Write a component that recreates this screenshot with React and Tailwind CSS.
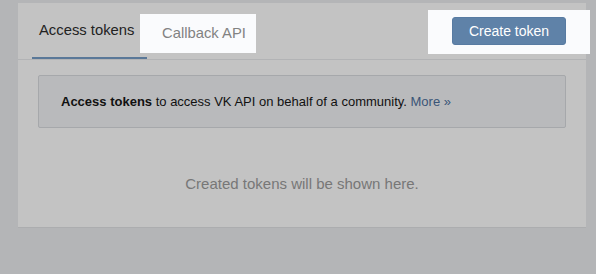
export default function App() {
  return (
    <div
      className="w-[596px] h-[274px] bg-[#b4b5b7] pl-[18px] pt-[3px] overflow-hidden"
      style={{ fontFamily: '"Liberation Sans", Arial, sans-serif' }}
    >
      <div className="w-[568px] h-[225px] bg-[#c3c3c3] border-b border-[#acadaf] flex flex-col">
        <div className="h-[57px] border-b border-[#b2b3b5] flex items-stretch relative">
          <div className="ml-[14px] w-[115px] h-[56px] border-b-2 border-[#5a7898] flex items-center pl-[7px] pt-[1px] text-[14.8px] text-[#222]">
            Access tokens
          </div>
          <div className="mt-[11px] h-[39px] w-[116px] bg-[#fafbfd] flex items-center pl-[22px] text-[14.8px] text-[#828282] -ml-[7px]">
            Callback API
          </div>
          <div className="flex-1" />
          <div className="mt-[7px] h-[44px] w-[162px] bg-[#fafbfd] -mr-[4px] flex items-start pl-[24px] pt-[7px]">
            <div className="w-[114px] h-[28px] rounded-[3px] bg-[#5f82a8] border border-[#587ba2] flex items-center justify-center text-white text-[14px]">
              Create token
            </div>
          </div>
        </div>
        <div className="mx-[20px] mt-[15px] h-[53px] bg-[#b9babc] border border-[#a6a8ab] rounded-[2px] flex items-center pl-[22px] text-[13px] text-[#111]">
          <span className="font-bold">Access tokens</span>
          <span className="whitespace-pre"> to access VK API on behalf of a community. </span>
          <span className="text-[#3a5577]">More »</span>
        </div>
        <div className="flex-1 flex items-center justify-center text-[15px] text-[#777] pt-[14px]">
          Created tokens will be shown here.
        </div>
      </div>
    </div>
  );
}
